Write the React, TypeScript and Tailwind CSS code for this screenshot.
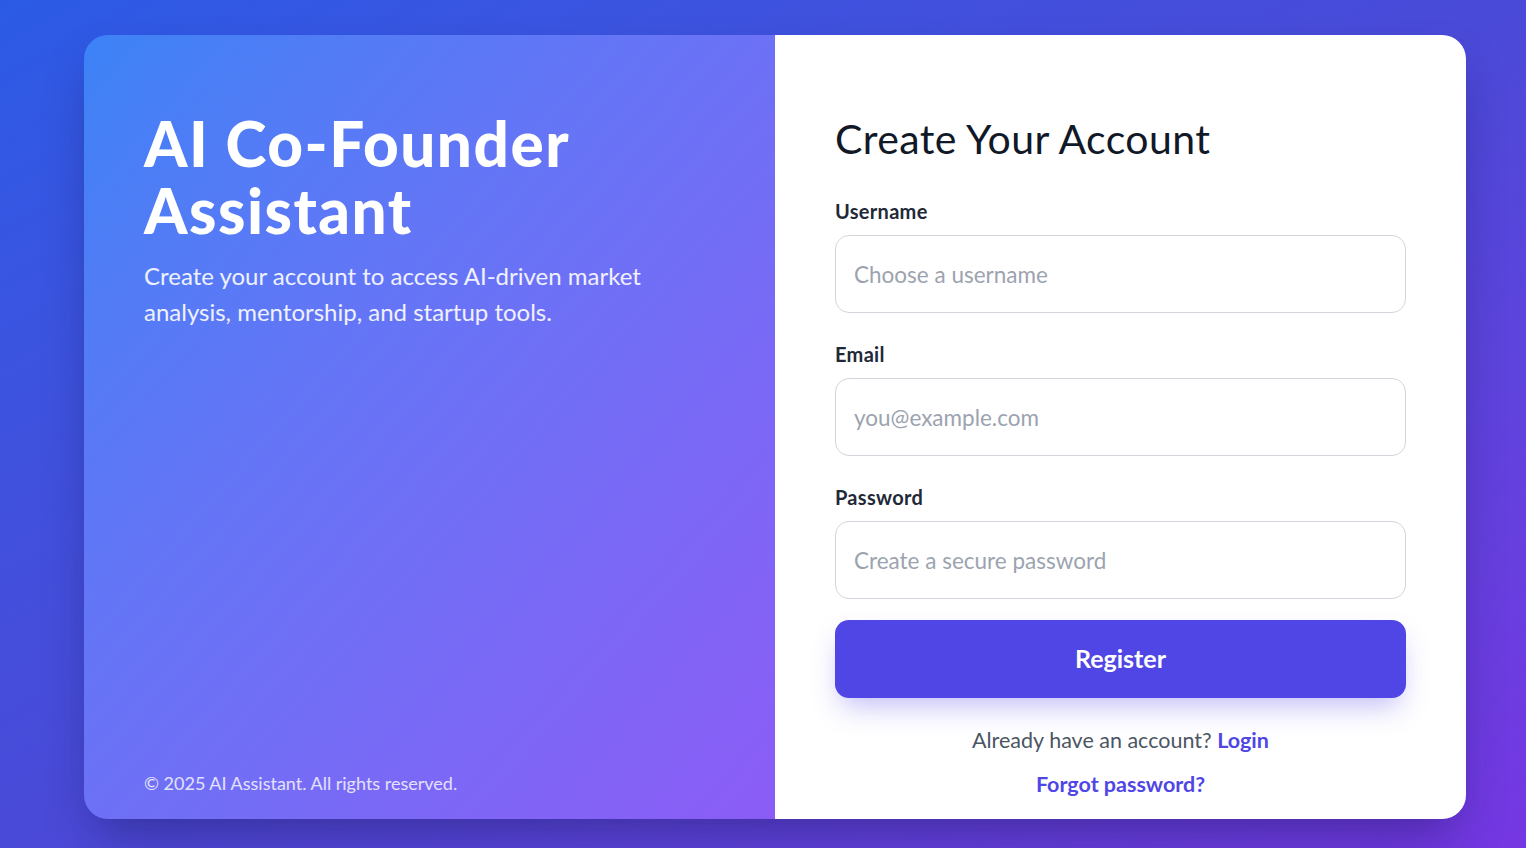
import React from "react";

export default function App() {
  const font = { fontFamily: "Lato, 'Noto Sans', sans-serif" };
  return (
    <div
      className="min-h-[848px] w-full bg-gradient-to-br from-[#2b5be6] via-[#4a4ad8] to-[#7537e3] pl-[84px] pr-[60px] pt-[35px] pb-[29px]"
      style={font}
    >
      <div className="flex h-[784px] w-full overflow-hidden rounded-[24px] shadow-[0_25px_50px_-12px_rgba(20,20,80,0.45)]">
        {/* Left panel */}
        <div className="flex w-1/2 flex-col bg-gradient-to-br from-[#3b82f6] to-[#8b5cf6] px-[60px] pt-[75px] pb-[23px] text-white">
          <h1 className="text-[62px] font-black leading-[67px] tracking-[1.5px]">
            AI Co-Founder
            <br />
            Assistant
          </h1>
          <p className="mt-[14px] max-w-[540px] text-[24px] leading-[36px] text-white/90">
            Create your account to access AI-driven market analysis, mentorship, and startup tools.
          </p>
          <div className="mt-auto text-[18px] leading-[25px] text-white/80">
            © 2025 AI Assistant. All rights reserved.
          </div>
        </div>

        {/* Right panel */}
        <div className="flex w-1/2 flex-col bg-white px-[60px] pt-[81px]">
          <h2 className="text-[41px] font-normal leading-[45px] tracking-[0.4px] text-[#111827]">
            Create Your Account
          </h2>
          <form className="mt-[38px] flex flex-col" onSubmit={(e) => e.preventDefault()}>
            <Field label="Username" placeholder="Choose a username" type="text" />
            <div className="mt-[29px]">
              <Field label="Email" placeholder="you@example.com" type="email" />
            </div>
            <div className="mt-[29px]">
              <Field label="Password" placeholder="Create a secure password" type="password" />
            </div>
            <button
              type="submit"
              className="mt-[21px] h-[78px] w-full rounded-[14px] bg-[#4f46e5] text-[25px] font-bold text-white shadow-[0_14px_28px_-6px_rgba(79,70,229,0.35)]"
            >
              Register
            </button>
          </form>
          <p className="mt-[28px] text-center text-[21.5px] leading-[28px] text-[#4b5563]">
            Already have an account?{" "}
            <a href="#" className="font-bold text-[#4f46e5]">
              Login
            </a>
          </p>
          <p className="mt-[16px] text-center text-[21.5px] leading-[28px]">
            <a href="#" className="font-bold text-[#4f46e5]">
              Forgot password?
            </a>
          </p>
        </div>
      </div>
    </div>
  );
}

function Field({
  label,
  placeholder,
  type,
}: {
  label: string;
  placeholder: string;
  type: string;
}) {
  return (
    <label className="flex flex-col">
      <span className="mb-[11px] text-[20px] font-bold leading-[25px] tracking-[0.3px] text-[#1f2937]">
        {label}
      </span>
      <input
        type={type}
        placeholder={placeholder}
        className="h-[78px] w-full rounded-[14px] border border-[#d1d5db] bg-white px-[18px] text-[22.5px] text-[#111827] outline-none placeholder:text-[#9ca3af]"
      />
    </label>
  );
}
